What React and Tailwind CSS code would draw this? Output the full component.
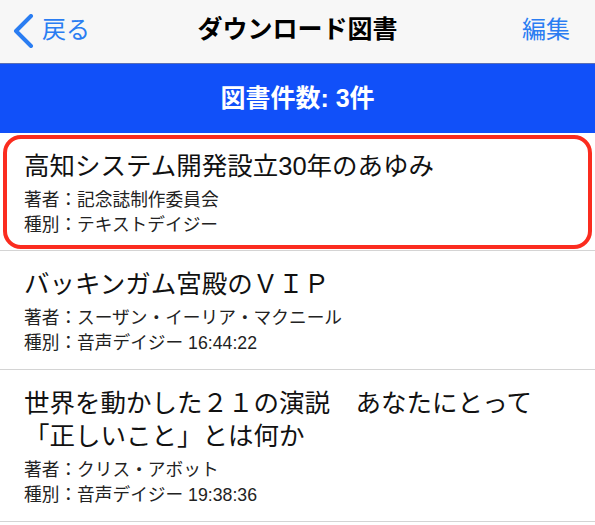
const font = { fontFamily: '"Liberation Sans", "Noto Sans CJK JP", sans-serif' };

const books = [
  {
    title: '高知システム開発設立30年のあゆみ',
    author: '記念誌制作委員会',
    kind: 'テキストデイジー',
    selected: true,
  },
  {
    title: 'バッキンガム宮殿のＶＩＰ',
    author: 'スーザン・イーリア・マクニール',
    kind: '音声デイジー 16:44:22',
  },
  {
    title: (
      <>
        世界を動かした２１の演説　あなたにとって
        <br />
        「正しいこと」とは何か
      </>
    ),
    author: 'クリス・アボット',
    kind: '音声デイジー 19:38:36',
  },
];

function BookText({ book }) {
  return (
    <>
      <div className="text-[25.5px] leading-[33px] text-[#111]">{book.title}</div>
      <div className="mt-[5px] text-[17.7px] leading-[25px] text-[#222]">著者：{book.author}</div>
      <div className="text-[17.7px] leading-[25px] text-[#222]">種別：{book.kind}</div>
    </>
  );
}

export default function App() {
  return (
    <div className="w-[595px] h-[525px] overflow-hidden bg-white" style={font}>
      <nav className="h-[64px] bg-[#f7f7f7] border-b border-[#5a6fb5] flex items-center justify-between relative">
        <div className="flex items-center pl-[12px] text-[#2a7df2]">
          <svg width="24" height="34" viewBox="0 0 24 34" className="mr-[6px] -mt-[2px]">
            <path d="M19 2 L4 17 L19 32" fill="none" stroke="currentColor" strokeWidth="4" strokeLinecap="round" strokeLinejoin="round" />
          </svg>
          <span className="text-[24px] leading-none -mt-[4px]">戻る</span>
        </div>
        <h1 className="absolute left-0 right-0 text-center text-[25px] font-bold leading-none text-black -mt-[4px] pointer-events-none">
          ダウンロード図書
        </h1>
        <span className="pr-[25px] text-[24px] leading-none text-[#2a7df2] -mt-[4px]">編集</span>
      </nav>

      <div className="h-[69px] bg-[#1150f9] flex items-center justify-center">
        <span className="text-white text-[25px] font-bold">図書件数: 3件</span>
      </div>

      {books.map((book, i) =>
        book.selected ? (
          <div key={i} className="border-b border-[#d4d4d4] pt-[2px] pb-[1px] px-[3px]">
            <div className="border-4 border-[#fb2c1f] rounded-[18px] pl-[17px] pt-[11px] pb-[7px]">
              <BookText book={book} />
            </div>
          </div>
        ) : (
          <div key={i} className="border-b border-[#d4d4d4] pl-[24px] pt-[17px] pb-[13px]">
            <BookText book={book} />
          </div>
        )
      )}
    </div>
  );
}
